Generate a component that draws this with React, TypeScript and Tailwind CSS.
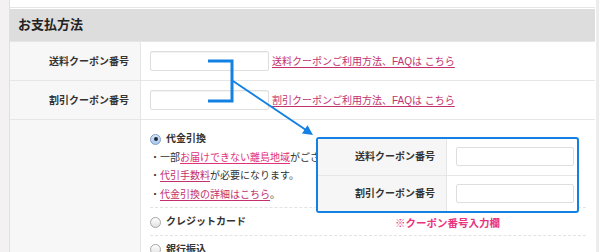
const FONT = "font-['Liberation_Sans','Noto_Sans_CJK_JP',sans-serif]";

const Input = () => (
  <div className="w-[119px] h-[20px] rounded-[2px] border border-[#dedede] bg-white shadow-[inset_0_1px_1px_rgba(0,0,0,0.05)]" />
);

const Radio = ({ checked = false }: { checked?: boolean }) =>
  checked ? (
    <div className="w-[11px] h-[11px] rounded-full border border-[#7d9cc9] bg-gradient-to-b from-[#d8e6f7] to-[#a9c6ec] flex items-center justify-center">
      <div className="w-[4px] h-[4px] rounded-full bg-[#1f2a3a]" />
    </div>
  ) : (
    <div className="w-[11px] h-[11px] rounded-full border border-[#a5a5a5] bg-gradient-to-b from-[#ffffff] to-[#e2e2e2]" />
  );

const CouponRow = ({ label, link }: { label: string; link: string }) => (
  <div className="flex shrink-0 h-[39px] border-t border-[#e6e6e6]">
    <div className="w-[131px] shrink-0 bg-[#f7f7f7] border-r border-[#e6e6e6] flex items-center justify-end pr-[11px] text-[10px] font-bold text-[#333]">
      {label}
    </div>
    <div className="flex items-center pl-[9px] gap-[3px]">
      <Input />
      <a className="text-[10px] text-[#c2306e] underline underline-offset-2 whitespace-nowrap">{link}</a>
    </div>
  </div>
);

const Annotation = () => (
  <>
    <svg className="absolute left-0 top-0" width="600" height="252" viewBox="0 0 600 252">
      <polyline points="208,61 232,61 232,101 208,101" fill="none" stroke="#1381e4" strokeWidth="3" />
      <line x1="233" y1="81" x2="306" y2="130" stroke="#1381e4" strokeWidth="2" />
      <polygon points="313,135 302,133.5 307.5,125.3" fill="#1381e4" />
    </svg>
    <div className="absolute left-[316px] top-[137px] w-[263px] h-[76px] rounded-[3px] border-2 border-[#1381e4] bg-white flex flex-col overflow-hidden">
      {["送料クーポン番号", "割引クーポン番号"].map((label, i) => (
        <div key={label} className={`flex flex-1 ${i > 0 ? "border-t border-[#e6e6e6]" : ""}`}>
          <div className="w-[129px] shrink-0 bg-[#f6f6f6] border-r border-[#e6e6e6] flex items-center justify-end pr-[11px] text-[10px] font-bold text-[#333]">
            {label}
          </div>
          <div className="flex items-center pl-[9px]">
            <div className="w-[118px] h-[19px] rounded-[2px] border border-[#dedede] bg-white" />
          </div>
        </div>
      ))}
    </div>
    <div className="absolute left-[316px] top-[214px] w-[263px] text-center text-[10.5px] font-bold text-[#e8337f] leading-[18px]">
      ※クーポン番号入力欄
    </div>
  </>
);

export default function App() {
  return (
    <div className={`relative w-[600px] h-[252px] overflow-hidden bg-white flex ${FONT} text-[#333]`}>
      <div className="w-[10px] shrink-0 bg-[#f4f1f3] border-r border-[#e2dee1]" />
      <div className="w-[585px] shrink-0 flex flex-col">
        <div className="h-[7px] shrink-0" />
        <div className="shrink-0 border-t border-[#e6e6e6] pt-[1px]">
          <div className="h-[32px] bg-[#dddddd] flex items-center pl-[8px] text-[13px] font-bold text-[#222]">
            お支払方法
          </div>
        </div>
        <CouponRow label="送料クーポン番号" link="送料クーポンご利用方法、FAQは こちら" />
        <CouponRow label="割引クーポン番号" link="割引クーポンご利用方法、FAQは こちら" />
        <div className="flex flex-1 min-h-0 overflow-hidden border-t border-[#e6e6e6]">
          <div className="w-[131px] shrink-0 bg-[#f7f7f7] border-r border-[#e6e6e6]" />
          <div className="flex-1 pl-[9px] pr-[9px] pt-[10px] text-[10px] leading-[18.5px]">
            <div className="pb-[3px]">
              <div className="flex items-center gap-[5px] font-bold">
                <Radio checked />
                <span>代金引換</span>
              </div>
              <p className="whitespace-nowrap">
                ・一部<a className="text-[#e0327a] underline underline-offset-2">お届けできない離島地域</a>がございます。
              </p>
              <p>
                ・<a className="text-[#c2306e] underline underline-offset-2">代引手数料</a>が必要になります。
              </p>
              <p>
                ・<a className="text-[#c2306e] underline underline-offset-2">代金引換の詳細はこちら</a>。
              </p>
            </div>
            <div className="border-t border-dashed border-[#e3e3e3] pt-[5px] pb-[3px]">
              <div className="flex items-center gap-[5px] font-bold">
                <Radio />
                <span>クレジットカード</span>
              </div>
            </div>
            <div className="border-t border-dashed border-[#e3e3e3] pt-[5px]">
              <div className="flex items-center gap-[5px] font-bold">
                <Radio />
                <span>銀行振込</span>
              </div>
            </div>
          </div>
        </div>
      </div>
      <div className="w-[1px] shrink-0" />
      <div className="w-[3px] shrink-0 bg-[#ececec]" />
      <Annotation />
    </div>
  );
}
